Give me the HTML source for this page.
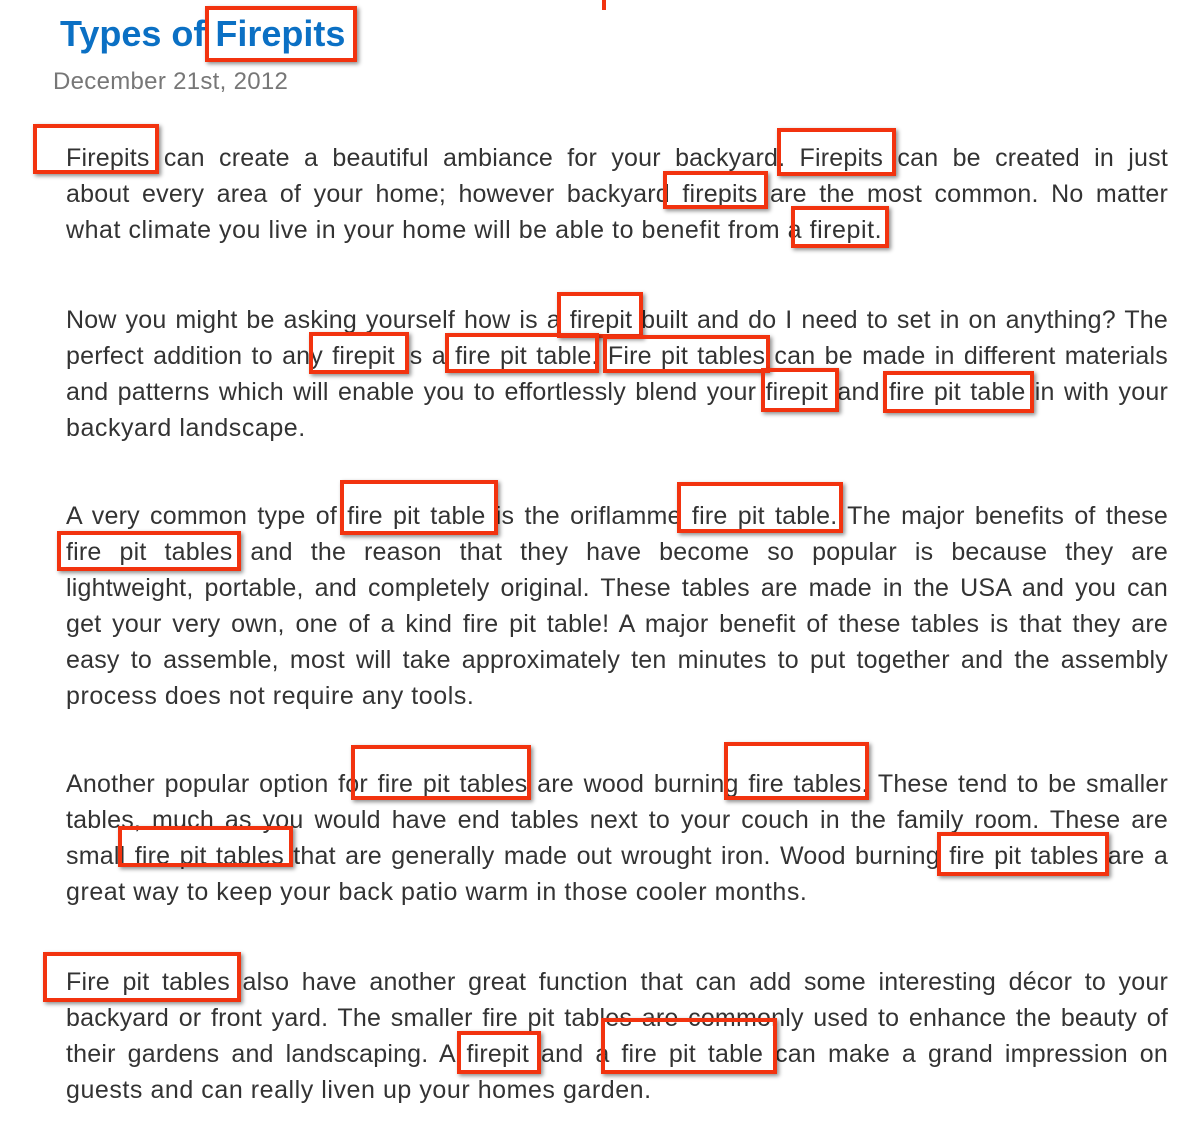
<!DOCTYPE html>
<html><head><meta charset="utf-8"><style>
body{margin:0;width:1204px;height:1134px;background:#fff;position:relative;overflow:hidden;font-family:"Liberation Sans",Arial,sans-serif}
.t{position:absolute;left:60px;top:12px;font-size:36px;font-weight:bold;color:#0b70c4;letter-spacing:0;line-height:44px}
.d{position:absolute;left:53px;top:68px;font-size:24px;color:#777;line-height:28px;letter-spacing:0.3px}
.l{position:absolute;left:66px;width:1102px;height:36px;line-height:36px;font-size:25px;color:#333;white-space:nowrap;letter-spacing:0.2px;word-spacing:-3px;text-align:justify;text-align-last:justify;margin-top:1px}
.l.e{text-align:left;text-align-last:left;letter-spacing:0.55px;word-spacing:0}
.b{position:absolute;border:4px solid #f2330f;box-shadow:2px 2px 4px rgba(0,0,0,.45);box-sizing:border-box}
</style></head><body>
<div style="position:absolute;left:602px;top:0;width:4px;height:10px;background:#f2330f"></div>
<div class="t">Types of Firepits</div>
<div class="d">December 21st, 2012</div>

<div class="l" style="top:139px">Firepits can create a beautiful ambiance for your backyard. Firepits can be created in just</div>
<div class="l" style="top:175px">about every area of your home; however backyard firepits are the most common. No matter</div>
<div class="l e" style="top:211px">what climate you live in your home will be able to benefit from a firepit.</div>

<div class="l" style="top:301px">Now you might be asking yourself how is a firepit built and do I need to set in on anything? The</div>
<div class="l" style="top:337px">perfect addition to any firepit is a fire pit table. Fire pit tables can be made in different materials</div>
<div class="l" style="top:373px">and patterns which will enable you to effortlessly blend your firepit and fire pit table in with your</div>
<div class="l e" style="top:409px">backyard landscape.</div>

<div class="l" style="top:497px">A very common type of fire pit table is the oriflamme fire pit table. The major benefits of these</div>
<div class="l" style="top:533px">fire pit tables and the reason that they have become so popular is because they are</div>
<div class="l" style="top:569px">lightweight, portable, and completely original. These tables are made in the USA and you can</div>
<div class="l" style="top:605px">get your very own, one of a kind fire pit table! A major benefit of these tables is that they are</div>
<div class="l" style="top:641px">easy to assemble, most will take approximately ten minutes to put together and the assembly</div>
<div class="l e" style="top:677px">process does not require any tools.</div>

<div class="l" style="top:765px">Another popular option for fire pit tables are wood burning fire tables.  These tend to be smaller</div>
<div class="l" style="top:801px">tables, much as you would have end tables next to your couch in the family room. These are</div>
<div class="l" style="top:837px">small fire pit tables that are generally made out wrought iron. Wood burning fire pit tables are a</div>
<div class="l e" style="top:873px">great way to keep your back patio warm in those cooler months.</div>

<div class="l" style="top:963px">Fire pit tables also have another great function that can add some interesting décor to your</div>
<div class="l" style="top:999px">backyard or front yard. The smaller fire pit tables are commonly used to enhance the beauty of</div>
<div class="l" style="top:1035px">their gardens and landscaping. A firepit and a fire pit table can make a grand impression on</div>
<div class="l e" style="top:1071px">guests and can really liven up your homes garden.</div>

<div class="b" style="left:205px;top:6px;width:152px;height:56px"></div>
<div class="b" style="left:33px;top:124px;width:126px;height:50px"></div>
<div class="b" style="left:777px;top:128px;width:119px;height:48px"></div>
<div class="b" style="left:663px;top:171px;width:105px;height:38px"></div>
<div class="b" style="left:791px;top:206px;width:98px;height:42px"></div>
<div class="b" style="left:557px;top:292px;width:86px;height:46px"></div>
<div class="b" style="left:309px;top:332px;width:100px;height:42px"></div>
<div class="b" style="left:445px;top:333px;width:154px;height:40px"></div>
<div class="b" style="left:603px;top:335px;width:167px;height:38px"></div>
<div class="b" style="left:761px;top:368px;width:78px;height:44px"></div>
<div class="b" style="left:883px;top:371px;width:151px;height:42px"></div>
<div class="b" style="left:340px;top:480px;width:158px;height:55px"></div>
<div class="b" style="left:677px;top:482px;width:166px;height:51px"></div>
<div class="b" style="left:57px;top:531px;width:184px;height:40px"></div>
<div class="b" style="left:351px;top:745px;width:180px;height:55px"></div>
<div class="b" style="left:724px;top:742px;width:145px;height:58px"></div>
<div class="b" style="left:118px;top:826px;width:175px;height:41px"></div>
<div class="b" style="left:937px;top:832px;width:172px;height:44px"></div>
<div class="b" style="left:43px;top:952px;width:198px;height:50px"></div>
<div class="b" style="left:457px;top:1031px;width:84px;height:43px"></div>
<div class="b" style="left:601px;top:1018px;width:176px;height:56px"></div>
</body></html>
